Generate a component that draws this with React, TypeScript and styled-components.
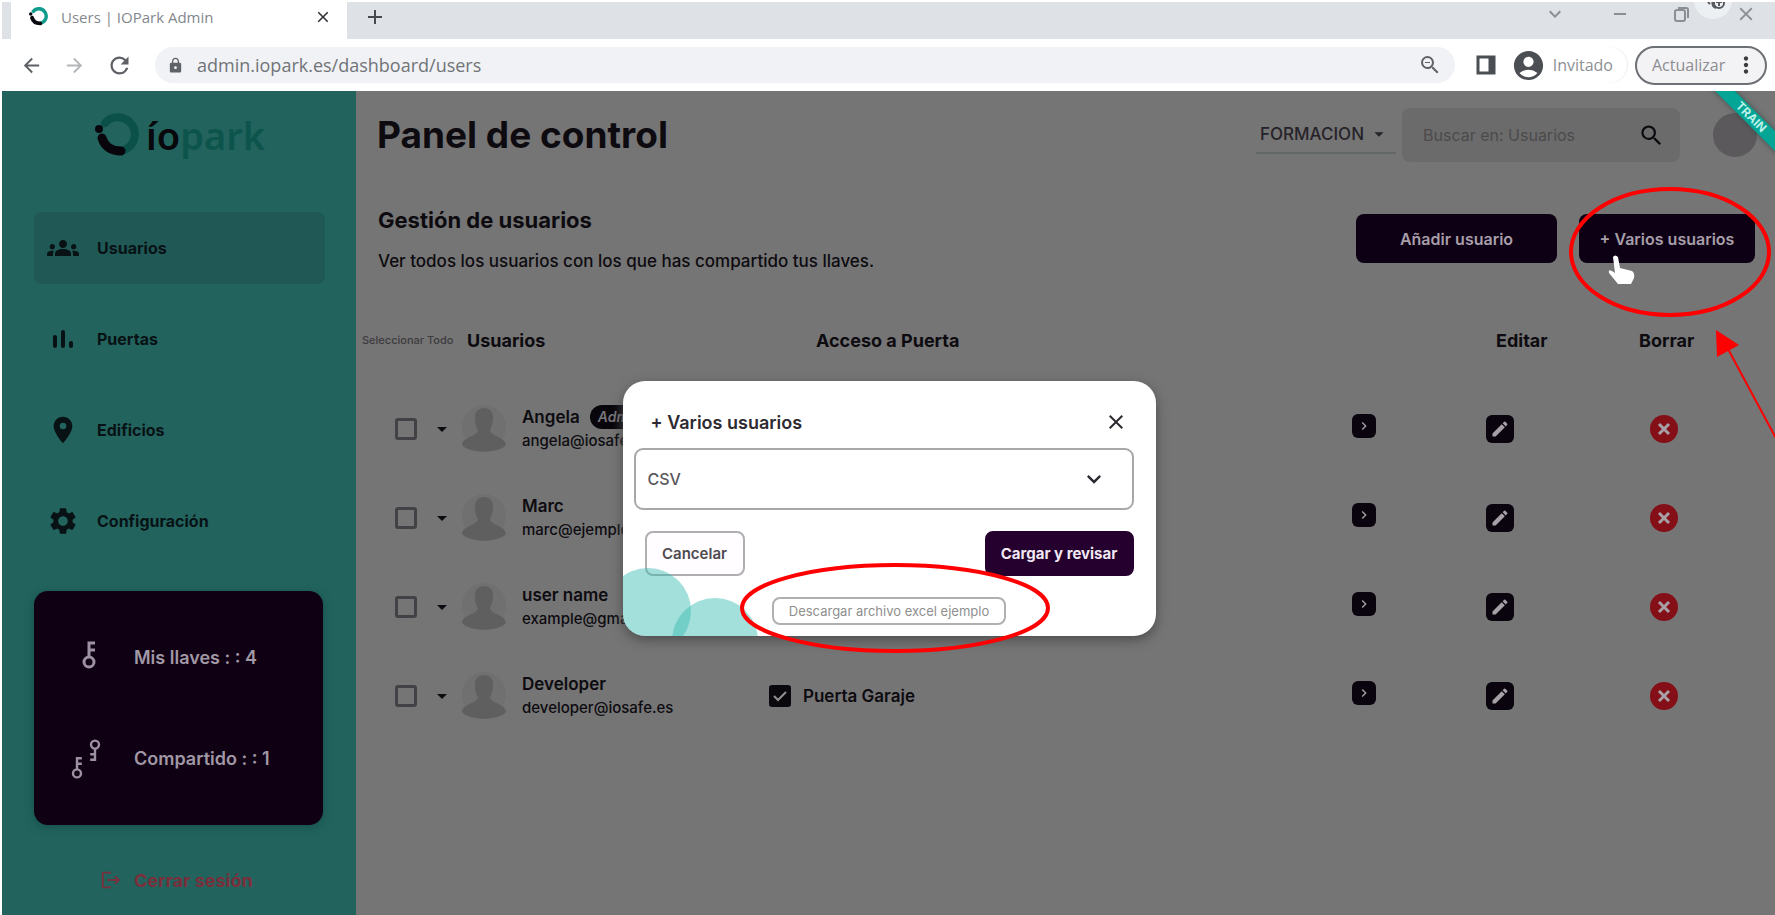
import React from "react";
import styled, { createGlobalStyle } from "styled-components";
import {
  MdArrowBack, MdArrowForward, MdRefresh, MdLock, MdAdd, MdClose, MdSearch, MdGroups,
  MdLocationOn, MdSettings, MdArrowDropDown, MdMoreVert, MdAccountCircle,
  MdZoomOut, MdEdit, MdLogout, MdKeyboardArrowDown, MdChevronRight,
} from "react-icons/md";

const Global = createGlobalStyle`
  *, *::before, *::after { box-sizing: border-box; }
  html, body, #root { height: 100%; }
  body { margin: 0; background: #fff; font-family: Inter, "Open Sans", sans-serif; color: #0d0b10; overflow: hidden; }
  button, input, select { font: inherit; color: inherit; }
  button { cursor: pointer; }
  a { color: inherit; text-decoration: none; }
  svg { display: block; flex: none; }
`;

const Window = styled.div`
  position: relative;
  min-height: 100vh;
  padding: 2px 0 0 2px;
  display: flex;
  flex-direction: column;
  overflow: hidden;
`;

/* ---------- browser chrome ---------- */
const TabStrip = styled.header`
  position: relative;
  height: 37px;
  display: flex;
  align-items: stretch;
  overflow: hidden;
  background: #dee1e6;
  font-family: "Open Sans", sans-serif;
`;
const Tab = styled.div`
  width: 336px;
  margin-left: 9px;
  padding: 0 15px 8px 18px;
  display: flex;
  align-items: center;
  background: #fff;
  color: #83888d;
  font-size: 15px;
  span { flex: 1; margin-left: 13px; white-space: nowrap; }
`;
const BareButton = styled.button`
  display: grid;
  place-items: center;
  padding: 0;
  border: 0;
  background: none;
`;
const NewTab = styled(BareButton)`
  margin: 0 0 8px 16px;
  color: #46494d;
`;
const WindowControls = styled.div`
  margin: 0 18px 14px auto;
  display: flex;
  align-items: center;
  gap: 44px;
  color: #8b8e93;
`;
const FloatingBubble = styled.div`
  position: absolute;
  right: 43px;
  top: -21px;
  width: 38px;
  height: 38px;
  padding: 17px 0 0 12px;
  border-radius: 50%;
  background: #edf0f2;
`;
const Toolbar = styled.nav`
  height: 52px;
  padding: 0 8px 0 18px;
  display: flex;
  align-items: center;
  background: #fff;
  font-family: "Open Sans", sans-serif;
`;
const NavButtons = styled.div`
  display: flex;
  gap: 20px;
  margin-right: 22px;
  color: #5c6064;
  button:nth-child(2) { color: #b4b7ba; }
`;
const Address = styled.label`
  flex: 1;
  height: 36px;
  margin-right: 21px;
  padding: 0 13px 0 12px;
  display: flex;
  align-items: center;
  gap: 13px;
  border-radius: 18px;
  background: #f1f2f5;
  color: #5f6368;
  input {
    flex: 1;
    min-width: 0;
    padding: 0;
    border: 0;
    outline: 0;
    background: none;
    font-size: 18px;
    color: #707478;
  }
`;
const Profile = styled(BareButton)`
  display: flex;
  align-items: center;
  gap: 7px;
  height: 36px;
  margin: 0 8px 0 15px;
  padding-right: 14px;
  border-radius: 18px;
  box-shadow: 1px 0 1px #ececee;
  color: #4b4e52;
  span { color: #8d9094; font-size: 16px; }
`;
const UpdateButton = styled.button`
  display: flex;
  align-items: center;
  justify-content: space-between;
  width: 132px;
  height: 39px;
  padding: 0 6px 0 15px;
  border: 2px solid #6d7074;
  border-radius: 20px;
  background: #f3f2f4;
  color: #8d8d91;
  font-size: 16px;
  svg { color: #3a3c3f; }
`;

/* ---------- page ---------- */
const Page = styled.div`
  flex: 1;
  display: flex;
  align-items: stretch;
  position: relative;
  overflow: hidden;
  background: #757575;
`;
const Sidebar = styled.aside`
  width: 354px;
  flex: none;
  display: flex;
  flex-direction: column;
  padding: 0 31px 18px 32px;
  background: #22635e;
`;
const Brand = styled.a`
  display: flex;
  align-items: center;
  height: 88px;
  margin: 0 0 33px 61px;
  font-family: "Noto Sans", sans-serif;
  font-size: 38px;
  font-weight: 600;
  color: #08070c;
  svg { margin-right: 7px; }
  em { font-style: normal; color: #0d544c; }
`;
const Menu = styled.ul`
  list-style: none;
  margin: 0;
  padding: 0;
  display: flex;
  flex-direction: column;
  gap: 19px;
`;
const MenuLink = styled.a<{ $active?: boolean }>`
  display: flex;
  align-items: center;
  gap: 18px;
  height: 72px;
  padding-left: 13px;
  border-radius: 8px;
  background: ${(p) => (p.$active ? "#1f5855" : "transparent")};
  color: #081214;
  font-size: 16px;
  font-weight: 700;
`;
const KeyCard = styled.section`
  margin: 34px 2px 0 0;
  padding: 16px 0;
  height: 234px;
  display: flex;
  flex-direction: column;
  border-radius: 14px;
  background: #100014;
  color: #a198a5;
  box-shadow: 0 2px 8px #164f4b;
`;
const KeyRow = styled.p`
  flex: 1;
  margin: 0;
  display: flex;
  align-items: center;
  gap: 20px;
  padding-left: 30px;
  font-size: 18px;
  font-weight: 600;
`;
const Logout = styled(BareButton)`
  display: flex;
  align-items: center;
  align-self: flex-start;
  gap: 12px;
  margin: 44px 0 0 66px;
  color: #7b2f3b;
  font-size: 18px;
  font-weight: 700;
`;

const Main = styled.main`
  flex: 1;
  min-width: 0;
`;
const TopBar = styled.div`
  display: flex;
  align-items: center;
  height: 88px;
  padding: 0 18px 0 21px;
`;
const Title = styled.h1`
  flex: 1;
  margin: 0;
  font-size: 37px;
  line-height: 44px;
  font-weight: 700;
`;
const OrgPicker = styled.button`
  width: 140px;
  height: 38px;
  display: flex;
  align-items: center;
  gap: 4px;
  margin-right: 6px;
  padding: 0 0 0 4px;
  border: 0;
  border-bottom: 2px solid #626767;
  background: none;
  color: #262328;
  font-size: 17px;
  font-weight: 500;
`;
const SearchBox = styled.label`
  width: 278px;
  height: 54px;
  margin-right: 33px;
  padding: 0 15px 0 21px;
  display: flex;
  align-items: center;
  border-radius: 8px;
  background: #6b6b6b;
  input {
    flex: 1;
    min-width: 0;
    border: 0;
    padding: 0;
    outline: 0;
    background: none;
    font-size: 16px;
  }
  input::placeholder { color: #4c4a4d; opacity: 1; }
`;
const Avatar = styled.div`
  width: 44px;
  height: 44px;
  border-radius: 50%;
  background: #5b595b;
`;
const Ribbon = styled.div`
  position: absolute;
  top: 19px;
  right: -36px;
  width: 120px;
  height: 14px;
  transform: rotate(45deg);
  background: #05a595;
  box-shadow: 0 0 5px #3c4a49;
  color: #bdf2ea;
  font-size: 12px;
  line-height: 14px;
  font-weight: 700;
  text-align: center;
`;
const Intro = styled.section`
  display: flex;
  align-items: flex-start;
  gap: 22px;
  height: 143px;
  padding: 27px 20px 0 22px;
  h2 { margin: 0; font-size: 22px; line-height: 28px; font-weight: 700; }
  p { margin: 16px 0 0; font-size: 17px; line-height: 22px; font-weight: 500; }
  div { flex: 1; }
`;
const DarkButton = styled.button<{ $width: number }>`
  width: ${(p) => p.$width}px;
  height: 49px;
  margin-top: 8px;
  padding: 0;
  border: 0;
  border-radius: 8px;
  background: #0e0014;
  color: #a79ea9;
  font-size: 16px;
  font-weight: 600;
  white-space: nowrap;
`;
const UsersTable = styled.table`
  width: 100%;
  border-collapse: collapse;
  table-layout: fixed;
  th, td { padding: 0; text-align: left; height: 89px; vertical-align: middle; }
  th { height: 36px; font-size: 18px; font-weight: 700; white-space: nowrap; }
  tbody::before { content: ""; display: block; height: 26px; }
  th:nth-child(1) { padding-left: 6px; font-size: 11px; font-weight: 500; color: #3d3b3e; }
  th:nth-child(3) { padding-left: 53px; }
  th:nth-child(5) { padding-left: 107px; }
  th:nth-child(6) { padding-left: 28px; }
  td:nth-child(4) { padding-bottom: 6px; }
`;
const SelectCell = styled.div`
  display: flex;
  align-items: center;
  padding-left: 39px;
  gap: 13px;
`;
const Check = styled.input`
  appearance: none;
  flex: none;
  width: 22px;
  height: 22px;
  margin: 0;
  border: 3px solid #434145;
  border-radius: 3px;
  &:checked {
    border-color: #0a080c;
    background: #0a080c url("data:image/svg+xml,%3Csvg xmlns='http://www.w3.org/2000/svg' viewBox='0 0 16 16'%3E%3Cpath d='M2 8l4 4 8-8' fill='none' stroke='%23909090' stroke-width='2'/%3E%3C/svg%3E") center / 16px no-repeat;
  }
`;
const Person = styled.div`
  display: flex;
  align-items: center;
  margin-left: -6px;
  line-height: 24px;
  svg { margin-right: 15px; }
  strong { display: flex; align-items: center; gap: 10px; font-size: 17px; font-weight: 600; }
  span { display: block; font-size: 15px; font-weight: 500; }
`;
const Badge = styled.mark`
  padding: 0 8px;
  border-radius: 12px;
  background: #08060b;
  color: #77747a;
  font-size: 14px;
  font-style: italic;
`;
const Door = styled.label`
  display: flex;
  align-items: center;
  gap: 12px;
  margin-left: 6px;
  font-size: 17px;
  font-weight: 600;
  white-space: nowrap;
`;
const IconButton = styled.button<{ $size: number; $danger?: boolean }>`
  display: grid;
  place-items: center;
  width: ${(p) => p.$size}px;
  height: ${(p) => p.$size}px;
  margin: 0 auto;
  padding: 0;
  border: 0;
  border-radius: ${(p) => (p.$danger ? "50%" : "6px")};
  background: ${(p) => (p.$danger ? "#850f17" : "#0a040e")};
  color: #a7a0a7;
`;

/* ---------- dialog ---------- */
const Dialog = styled.section`
  position: absolute;
  left: 50%;
  top: 290px;
  margin-left: -266px;
  width: 533px;
  height: 255px;
  padding: 21px 22px 10px 11px;
  border-radius: 22px;
  background: #fff;
  box-shadow: 0 4px 12px #4d4d4d;
  overflow: hidden;
  display: flex;
  flex-direction: column;
  color: #2e2a31;
`;
const DialogHead = styled.div`
  display: flex;
  align-items: center;
  justify-content: space-between;
  height: 40px;
  padding: 0 6px 0 17px;
  h2 { margin: 0; font-size: 18px; font-weight: 600; }
`;
const SelectWrap = styled.div`
  position: relative;
  margin-top: 6px;
  select {
    appearance: none;
    display: block;
    width: 100%;
    height: 62px;
    padding: 0 12px;
    border: 2px solid #aaa7aa;
    border-radius: 9px;
    background: #fff;
    color: #59565a;
    font-size: 16px;
    font-weight: 500;
  }
  svg { position: absolute; right: 26px; top: 17px; pointer-events: none; }
`;
const Actions = styled.div`
  display: flex;
  justify-content: space-between;
  margin: 21px 0 21px 11px;
`;
const Action = styled.button<{ $primary?: boolean }>`
  width: ${(p) => (p.$primary ? 149 : 100)}px;
  height: 45px;
  padding: 0;
  border: 2px solid ${(p) => (p.$primary ? "#25002e" : "#b0aeb1")};
  border-radius: 8px;
  background: ${(p) => (p.$primary ? "#25002e" : "#fffdff")};
  color: ${(p) => (p.$primary ? "#f0e8f2" : "#4f4b51")};
  font-size: 15px;
  font-weight: ${(p) => (p.$primary ? 700 : 600)};
`;
const Download = styled.button`
  align-self: center;
  margin-left: 11px;
  width: 234px;
  height: 28px;
  padding: 0;
  border: 2px solid #b0b0b0;
  border-radius: 8px;
  background: #fff;
  color: #8f8f8f;
  font-size: 13px;
`;
const Bubbles = styled.svg`
  position: absolute;
  left: 0;
  bottom: 0;
`;
const Marks = styled.svg`
  position: absolute;
  top: 0;
  pointer-events: none;
`;
const CenterMarks = styled(Marks)`
  left: 50%;
  margin-left: -150px;
`;
const RightMarks = styled(Marks)`
  right: 0;
`;

const RingLogo = ({ size, bright }: { size: number; bright?: boolean }) => (
  <svg width={size} height={size} viewBox="0 0 44 44" fill="none" strokeLinecap="round" aria-hidden="true">
    <path d="M10 10A17 17 0 1 1 29 37" stroke={bright ? "#0f9c8d" : "#0b5049"} strokeWidth="8" />
    <path d="M7 25C9 32 15 38 26 38" stroke="#08060c" strokeWidth="9" />
    <circle cx="4" cy="16" r="4" fill="#08060c" />
  </svg>
);

const Key = ({ x, y, s = 1, flip }: { x: number; y: number; s?: number; flip?: boolean }) => (
  <g transform={`translate(${x} ${y}) scale(${s}) rotate(${flip ? 180 : 0})`}>
    <circle cx="0" cy="8" r="5" strokeWidth="3" />
    <path d="M0 3V-11H6M0 -4H6" strokeWidth="3" />
  </g>
);

const KeyIcon = ({ pair }: { pair?: boolean }) => (
  <svg width="50" height="50" viewBox="0 0 50 50" fill="none" stroke="#9d92a1" aria-hidden="true">
    {pair ? (
      <>
        <Key x={13} y={33} s={0.8} />
        <Key x={31} y={17} s={0.8} flip />
      </>
    ) : (
      <Key x={25} y={21} />
    )}
  </svg>
);

const BarsIcon = ({ size }: { size: number }) => (
  <svg width={size} height={size} viewBox="0 0 32 32" stroke="currentColor" strokeWidth="4" strokeLinecap="round" aria-hidden="true">
    <path d="M8 14V23M16 9V23M24 20V23" />
  </svg>
);

const CrossIcon = () => (
  <svg width="14" height="14" viewBox="0 0 14 14" stroke="currentColor" strokeWidth="3" aria-hidden="true">
    <path d="M2 2L12 12M12 2L2 12" />
  </svg>
);

const Silhouette = () => (
  <svg width="46" height="52" viewBox="0 0 46 52" fill="#5f5f60" aria-hidden="true">
    <circle cx="23" cy="24" r="22" fill="#707071" />
    <path d="M14 14C14 2 32 2 32 14C32 22 30 24 29 27C30 34 44 33 45 42C38 51 8 51 1 42C2 33 16 34 17 27C15 24 14 22 14 14Z" />
  </svg>
);

const menu = [
  { label: "Usuarios", Icon: MdGroups, active: true },
  { label: "Puertas", Icon: BarsIcon },
  { label: "Edificios", Icon: MdLocationOn },
  { label: "Configuración", Icon: MdSettings },
];

const users = [
  { name: "Angela", mail: "angela@iosafe.es", admin: true },
  { name: "Marc", mail: "marc@ejemplo.com" },
  { name: "user name", mail: "example@gmail.com" },
  { name: "Developer", mail: "developer@iosafe.es", door: "Puerta Garaje" },
];

export default function App() {
  return (
    <Window>
      <Global />
      <TabStrip>
        <Tab>
          <RingLogo size={19} bright />
          <span>Users | IOPark Admin</span>
          <BareButton aria-label="Cerrar pestaña"><MdClose size={18} color="#2b2d30" /></BareButton>
        </Tab>
        <NewTab aria-label="Nueva pestaña"><MdAdd size={24} /></NewTab>
        <WindowControls>
          <BareButton aria-label="Buscar pestañas"><MdKeyboardArrowDown size={24} /></BareButton>
          <BareButton aria-label="Minimizar">
            <svg width="18" height="18" stroke="currentColor" strokeWidth="2"><path d="M3 9H15" /></svg>
          </BareButton>
          <BareButton aria-label="Restaurar">
            <svg width="18" height="18" fill="none" stroke="currentColor" strokeWidth="2">
              <rect x="2" y="5" width="10" height="11" rx="2" />
              <path d="M5 3H13Q15 3 15 5V13" />
            </svg>
          </BareButton>
          <BareButton aria-label="Cerrar"><MdClose size={22} /></BareButton>
        </WindowControls>
        <FloatingBubble>
          <svg width="22" height="14" fill="none" stroke="#55585c" strokeWidth="2" aria-hidden="true">
            <path d="M2 4L4 6M7 2Q5 8 10 10" />
            <circle cx="13" cy="5" r="5" />
            <path d="M10 4H16M13 2V8" />
          </svg>
        </FloatingBubble>
      </TabStrip>
      <Toolbar>
        <NavButtons>
          <BareButton aria-label="Atrás"><MdArrowBack size={23} /></BareButton>
          <BareButton aria-label="Adelante"><MdArrowForward size={23} /></BareButton>
          <BareButton aria-label="Recargar"><MdRefresh size={27} /></BareButton>
        </NavButtons>
        <Address>
          <MdLock size={17} />
          <input aria-label="Dirección" defaultValue="admin.iopark.es/dashboard/users" />
          <MdZoomOut size={24} />
        </Address>
        <svg width="20" height="20" fill="none" stroke="#4b4e52" strokeWidth="3" aria-hidden="true">
          <rect x="2" y="2" width="16" height="16" />
          <path d="M15 2V18" strokeWidth="5" />
        </svg>
        <Profile>
          <MdAccountCircle size={35} />
          <span>Invitado</span>
        </Profile>
        <UpdateButton>Actualizar <MdMoreVert size={26} /></UpdateButton>
      </Toolbar>

      <Page>
        <Sidebar>
          <Brand href="#inicio">
            <RingLogo size={44} />
            ío<em>park</em>
          </Brand>
          <Menu>
            {menu.map(({ label, Icon, active }) => (
              <li key={label}>
                <MenuLink href={`#${label}`} $active={active}>
                  <Icon size={32} />
                  {label}
                </MenuLink>
              </li>
            ))}
          </Menu>
          <KeyCard>
            <KeyRow><KeyIcon />Mis llaves : : 4</KeyRow>
            <KeyRow><KeyIcon pair />Compartido : : 1</KeyRow>
          </KeyCard>
          <Logout><MdLogout size={22} />Cerrar sesión</Logout>
        </Sidebar>

        <Main>
          <TopBar>
            <Title>Panel de control</Title>
            <OrgPicker>FORMACION <MdArrowDropDown size={22} /></OrgPicker>
            <SearchBox>
              <input aria-label="Buscar" placeholder="Buscar en: Usuarios" />
              <MdSearch size={27} />
            </SearchBox>
            <Avatar />
          </TopBar>
          <Intro>
            <div>
              <h2>Gestión de usuarios</h2>
              <p>Ver todos los usuarios con los que has compartido tus llaves.</p>
            </div>
            <DarkButton $width={201}>Añadir usuario</DarkButton>
            <DarkButton $width={176}>+ Varios usuarios</DarkButton>
          </Intro>
          <UsersTable>
            <colgroup>
              <col style={{ width: 111 }} />
              <col style={{ width: 296 }} />
              <col />
              <col style={{ width: 50 }} />
              <col style={{ width: 222 }} />
              <col style={{ width: 106 }} />
              <col style={{ width: 58 }} />
            </colgroup>
            <thead>
              <tr>
                <th>Seleccionar Todo</th>
                <th>Usuarios</th>
                <th>Acceso a Puerta</th>
                <th />
                <th>Editar</th>
                <th>Borrar</th>
                <th />
              </tr>
            </thead>
            <tbody>
              {users.map((u) => (
                <tr key={u.name}>
                  <td>
                    <SelectCell>
                      <Check type="checkbox" aria-label={`Seleccionar ${u.name}`} />
                      <MdArrowDropDown size={24} />
                    </SelectCell>
                  </td>
                  <td>
                    <Person>
                      <Silhouette />
                      <div>
                        <strong>{u.name}{u.admin && <Badge>Admin</Badge>}</strong>
                        <span>{u.mail}</span>
                      </div>
                    </Person>
                  </td>
                  <td>{u.door && <Door><Check type="checkbox" defaultChecked />{u.door}</Door>}</td>
                  <td><IconButton $size={24} aria-label="Ver"><MdChevronRight size={16} /></IconButton></td>
                  <td><IconButton $size={28} aria-label="Editar"><MdEdit size={20} /></IconButton></td>
                  <td><IconButton $size={28} $danger aria-label="Borrar"><CrossIcon /></IconButton></td>
                  <td />
                </tr>
              ))}
            </tbody>
          </UsersTable>
        </Main>

        <Ribbon>TRAIN</Ribbon>

        <Dialog role="dialog" aria-label="Varios usuarios">
          <DialogHead>
            <h2>+ Varios usuarios</h2>
            <BareButton aria-label="Cerrar"><MdClose size={24} /></BareButton>
          </DialogHead>
          <SelectWrap>
            <select aria-label="Formato"><option>CSV</option></select>
            <MdKeyboardArrowDown size={28} />
          </SelectWrap>
          <Actions>
            <Action>Cancelar</Action>
            <Action $primary>Cargar y revisar</Action>
          </Actions>
          <Download>Descargar archivo excel ejemplo</Download>
          <Bubbles width="136" height="68" aria-hidden="true" fill="#35bbb0" fillOpacity="0.45">
            <circle cx="25" cy="43" r="43" />
            <circle cx="92" cy="73" r="43" />
          </Bubbles>
        </Dialog>
      </Page>

      <CenterMarks width="315" height="660" fill="none" stroke="#ff0000" strokeWidth="4" aria-hidden="true">
        <ellipse cx="157" cy="608" rx="153" ry="43" />
      </CenterMarks>
      <RightMarks width="220" height="460" fill="none" stroke="#ff0000" strokeWidth="4" aria-hidden="true">
        <path d="M58 257Q60 254 63 257L65 268L77 271Q80 273 79 278L76 284H63L54 273Q53 269 57 271L60 273Z" fill="#fff" stroke="none" />
        <ellipse cx="115" cy="252" rx="99" ry="63" />
        <path d="M173 349L222 440" strokeWidth="2" />
        <path d="M161 330L162 357L184 345Z" fill="#ff0000" stroke="none" />
      </RightMarks>
    </Window>
  );
}
